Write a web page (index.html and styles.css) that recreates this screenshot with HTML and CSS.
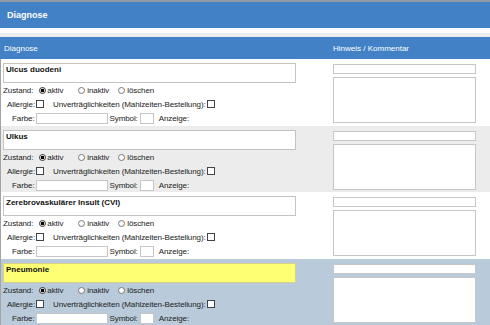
FILE: index.html
```html
<!DOCTYPE html>
<html lang="de">
<head>
<meta charset="utf-8">
<title>Diagnose</title>
<link rel="stylesheet" href="styles.css">
</head>
<body>
<div class="page">
  <div class="title">Diagnose</div>
  <div class="strip"></div>
  <div class="colhead">
    <div class="ch-left">Diagnose</div>
    <div class="ch-right">Hinweis / Kommentar</div>
  </div>
  <div class="rows">
    <div class="row r-white h67">
      <div class="main">
        <div class="name">Ulcus duodeni</div>
        <div class="line zustand"><span>Zustand:</span><input type="radio" name="z1" class="rb rb1" checked><span class="rt1">aktiv</span><input type="radio" name="z1" class="rb rb2"><span class="rt">inaktiv</span><input type="radio" name="z1" class="rb rb3"><span class="rt">löschen</span></div>
        <div class="line allergie"><span>Allergie:</span><input type="checkbox" class="cb"><span class="unv">Unverträglichkeiten (Mahlzeiten-Bestellung):</span><input type="checkbox" class="cb"></div>
        <div class="line farbe"><span>Farbe:</span><input type="text" class="farbe-in"><span class="sym">Symbol:</span><input type="text" class="sym-in"><span class="anz">Anzeige:</span></div>
      </div>
      <div class="side"><input type="text" class="hint"><textarea class="comment"></textarea></div>
    </div>
    <div class="row r-gray h66">
      <div class="main">
        <div class="name">Ulkus</div>
        <div class="line zustand"><span>Zustand:</span><input type="radio" name="z2" class="rb rb1" checked><span class="rt1">aktiv</span><input type="radio" name="z2" class="rb rb2"><span class="rt">inaktiv</span><input type="radio" name="z2" class="rb rb3"><span class="rt">löschen</span></div>
        <div class="line allergie"><span>Allergie:</span><input type="checkbox" class="cb"><span class="unv">Unverträglichkeiten (Mahlzeiten-Bestellung):</span><input type="checkbox" class="cb"></div>
        <div class="line farbe"><span>Farbe:</span><input type="text" class="farbe-in"><span class="sym">Symbol:</span><input type="text" class="sym-in"><span class="anz">Anzeige:</span></div>
      </div>
      <div class="side"><input type="text" class="hint"><textarea class="comment"></textarea></div>
    </div>
    <div class="row r-white h67">
      <div class="main">
        <div class="name">Zerebrovaskulärer Insult (CVI)</div>
        <div class="line zustand"><span>Zustand:</span><input type="radio" name="z3" class="rb rb1" checked><span class="rt1">aktiv</span><input type="radio" name="z3" class="rb rb2"><span class="rt">inaktiv</span><input type="radio" name="z3" class="rb rb3"><span class="rt">löschen</span></div>
        <div class="line allergie"><span>Allergie:</span><input type="checkbox" class="cb"><span class="unv">Unverträglichkeiten (Mahlzeiten-Bestellung):</span><input type="checkbox" class="cb"></div>
        <div class="line farbe"><span>Farbe:</span><input type="text" class="farbe-in"><span class="sym">Symbol:</span><input type="text" class="sym-in"><span class="anz">Anzeige:</span></div>
      </div>
      <div class="side"><input type="text" class="hint"><textarea class="comment"></textarea></div>
    </div>
    <div class="row r-blue h66">
      <div class="main">
        <div class="name name-yellow">Pneumonie</div>
        <div class="line zustand"><span>Zustand:</span><input type="radio" name="z4" class="rb rb1" checked><span class="rt1">aktiv</span><input type="radio" name="z4" class="rb rb2"><span class="rt">inaktiv</span><input type="radio" name="z4" class="rb rb3"><span class="rt">löschen</span></div>
        <div class="line allergie"><span>Allergie:</span><input type="checkbox" class="cb"><span class="unv">Unverträglichkeiten (Mahlzeiten-Bestellung):</span><input type="checkbox" class="cb"></div>
        <div class="line farbe"><span>Farbe:</span><input type="text" class="farbe-in"><span class="sym">Symbol:</span><input type="text" class="sym-in"><span class="anz">Anzeige:</span></div>
      </div>
      <div class="side"><input type="text" class="hint"><textarea class="comment"></textarea></div>
    </div>
  </div>
</div>
</body>
</html>
```
FILE: styles.css
```css
* { box-sizing: border-box; }
html, body { margin: 0; padding: 0; }
body {
  font-family: "Liberation Sans", Arial, sans-serif;
  font-size: 8px;
  color: #222;
  background: #fff;
  width: 490px;
  height: 325px;
  overflow: hidden;
}
.page { width: 490px; }
.title {
  border-top: 2px solid #949aa3;
  background: #4281c6;
  height: 28px;
  color: #fff;
  font-weight: bold;
  font-size: 9px;
  display: flex;
  align-items: center;
  padding-left: 7px;
}
.strip {
  height: 9px;
  background: #fbfbfb;
  border-bottom: 4px solid #ececec;
}
.colhead {
  height: 22px;
  background: #4281c6;
  color: #fff;
  display: flex;
  align-items: center;
}
.ch-left { width: 333px; padding-left: 4px; }
.ch-right { flex: 1; }
.rows { border-left: 1px solid #a4a4a4; }
.row {
  display: flex;
}
.h67 { height: 67px; }
.h66 { height: 66px; }
.r-white { background: #fff; }
.r-gray { background: #ececec; }
.r-blue { background: #b9cbdb; }
.main {
  width: 332px;
  padding: 4px 0 0 2px;
}
.name {
  width: 293px;
  height: 20px;
  border: 1px solid #c4c4c4;
  background: #fff;
  font-weight: bold;
  color: #111;
  padding: 1px 0 0 2px;
  line-height: 10px;
}
.name-yellow { background: #ffff73; border-color: #d8d08a; }
.line {
  height: 14px;
  display: flex;
  align-items: center;
  white-space: nowrap;
  letter-spacing: -0.1px;
}
.zustand { padding-left: 0; }
.allergie { padding-left: 4px; }
.farbe { padding-left: 9px; }
.rb {
  appearance: none;
  -webkit-appearance: none;
  width: 7px;
  height: 7px;
  margin: 0;
  border: 1px solid #777;
  border-radius: 50%;
  background: #fff;
}
.rb:checked {
  border-color: #333;
  background: radial-gradient(circle, #000 0, #000 1.6px, #fff 2.1px);
}
.rb1 { margin-left: 6px; }
.rb2 { margin-left: 15px; }
.rb3 { margin-left: 9px; }
.rt1 { margin-left: 1px; }
.rt { margin-left: 2px; }
.cb {
  appearance: none;
  -webkit-appearance: none;
  width: 8px;
  height: 8px;
  margin: 0 0 0 1px;
  border: 1px solid #444;
  background: #fff;
}
.unv { margin-left: 9px; }
.farbe-in, .sym-in {
  height: 11px;
  margin: 0 0 0 1px;
  padding: 0;
  border: 1px solid #c6c6c6;
  background: #fff;
}
.farbe-in { width: 72px; }
.sym { margin-left: 2px; }
.sym-in { width: 14px; margin-left: 2px; }
.anz { margin-left: 5px; }
.side {
  width: 143px;
  padding-top: 5px;
  display: flex;
  flex-direction: column;
}
.hint {
  width: 143px;
  height: 10px;
  margin: 0;
  padding: 0;
  border: 1px solid #c6c6c6;
  background: #fff;
}
.comment {
  width: 143px;
  height: 46px;
  margin: 3px 0 0 0;
  padding: 0;
  border: 1px solid #c6c6c6;
  background: #fff;
  resize: none;
}
```
